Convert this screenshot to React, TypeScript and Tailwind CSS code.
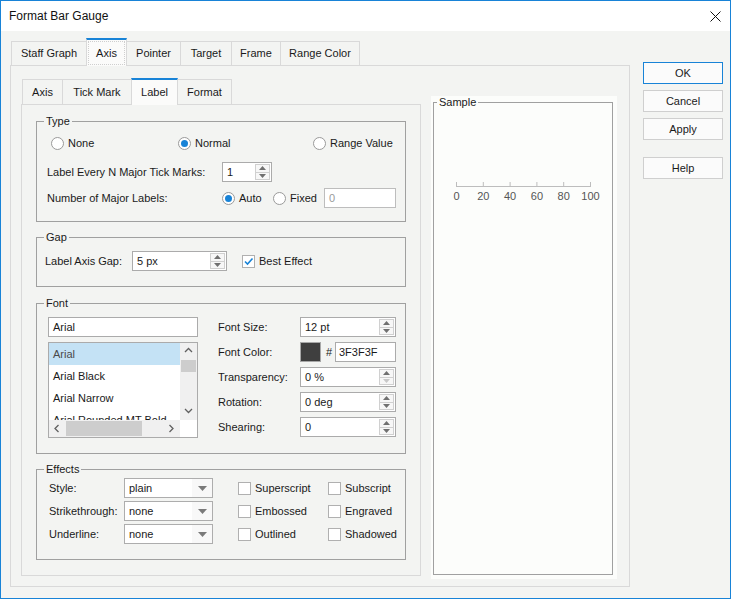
import React from "react";

const fonts = ["Arial", "Arial Black", "Arial Narrow", "Arial Rounded MT Bold"];

function Radio({ checked, label }: { checked?: boolean; label: string }) {
  return (
    <div className="flex items-center gap-[4px]">
      <span className="flex h-[13px] w-[13px] items-center justify-center rounded-full border border-[#9a9a9a] bg-white">
        {checked && <span className="h-[7px] w-[7px] rounded-full bg-[#1883d7]" />}
      </span>
      <span>{label}</span>
    </div>
  );
}

function Checkbox({ checked, label }: { checked?: boolean; label: string }) {
  return (
    <div className="flex items-center gap-[4px]">
      <span className="flex h-[13px] w-[13px] items-center justify-center border border-[#b0b0b0] bg-white">
        {checked && (
          <svg width="11" height="11" viewBox="0 0 11 11">
            <path d="M2 5.5 L4.5 8 L9.5 2.5" fill="none" stroke="#1883d7" strokeWidth="1.6" />
          </svg>
        )}
      </span>
      <span>{label}</span>
    </div>
  );
}

function SpinButtons({ downDisabled }: { downDisabled?: boolean }) {
  return (
    <div className="flex w-[16px] flex-col py-px pr-px">
      <span className="flex flex-1 items-center justify-center border border-[#d0d0d0] bg-[#f7f7f7]">
        <svg width="7" height="4" viewBox="0 0 7 4">
          <path d="M0 4 L3.5 0 L7 4 Z" fill="#707070" />
        </svg>
      </span>
      <span className="-mt-px flex flex-1 items-center justify-center border border-[#d0d0d0] bg-[#f7f7f7]">
        <svg width="7" height="4" viewBox="0 0 7 4">
          <path d="M0 0 L7 0 L3.5 4 Z" fill={downDisabled ? "#c8c8c8" : "#707070"} />
        </svg>
      </span>
    </div>
  );
}

function Spinner({
  value,
  width,
  downDisabled,
}: {
  value: string;
  width: string;
  downDisabled?: boolean;
}) {
  return (
    <div className={`flex h-[20px] border border-[#ababab] bg-white ${width}`}>
      <span className="flex flex-1 items-center pl-[4px]">{value}</span>
      <SpinButtons downDisabled={downDisabled} />
    </div>
  );
}

function Dropdown({ value }: { value: string }) {
  return (
    <div className="flex h-[20px] w-[89px] border border-[#adadad] bg-white">
      <span className="flex flex-1 items-center pl-[4px]">{value}</span>
      <span className="flex w-[20px] items-center justify-center bg-[#f8f8f8]">
        <svg width="9" height="5" viewBox="0 0 9 5">
          <path d="M0 0 H9 L4.5 5 Z" fill="#7a7a7a" />
        </svg>
      </span>
    </div>
  );
}

function Group({
  title,
  className,
  children,
}: {
  title: string;
  className?: string;
  children: React.ReactNode;
}) {
  return (
    <fieldset className={`w-[370px] border border-[#a0a0a0] ${className ?? ""}`}>
      <legend className="ml-[7px] px-[2px] leading-[14px]">{title}</legend>
      {children}
    </fieldset>
  );
}

function Chevron({ dir }: { dir: "up" | "down" | "left" | "right" }) {
  const d = {
    up: "M1 5 L4.5 1.5 L8 5",
    down: "M1 2 L4.5 5.5 L8 2",
    left: "M5.5 1 L2 4.5 L5.5 8",
    right: "M2.5 1 L6 4.5 L2.5 8",
  }[dir];
  return (
    <svg width="9" height="9" viewBox="0 0 9 9">
      <path d={d} fill="none" stroke="#606060" strokeWidth="1.3" />
    </svg>
  );
}

function OuterTab({ label, width, selected }: { label: string; width: string; selected?: boolean }) {
  if (selected) {
    return (
      <div
        className={`relative z-10 -mb-px -ml-px flex h-[28px] items-stretch border-x border-t-2 border-[#d9d9d9] border-t-[#1883d7] bg-[#fbfbfa] p-px ${width}`}
      >
        <span className="flex flex-1 items-center justify-center border border-dotted border-[#cfcfcf]">
          {label}
        </span>
      </div>
    );
  }
  return (
    <div
      className={`-ml-px flex h-[24px] items-center justify-center border border-b-0 border-[#d9d9d9] bg-[#f3f4f2] first:ml-0 ${width}`}
    >
      {label}
    </div>
  );
}

function InnerTab({ label, width, selected }: { label: string; width: string; selected?: boolean }) {
  if (selected) {
    return (
      <div
        className={`relative z-10 -mb-px -ml-px flex h-[27px] items-center justify-center border-x border-t-2 border-[#d9d9d9] border-t-[#1883d7] bg-[#fbfbfa] ${width}`}
      >
        {label}
      </div>
    );
  }
  return (
    <div
      className={`-ml-px flex h-[25px] items-center justify-center border border-b-0 border-[#d9d9d9] bg-[#f3f4f2] first:ml-0 ${width}`}
    >
      {label}
    </div>
  );
}

function DialogButton({ label, primary }: { label: string; primary?: boolean }) {
  return (
    <div
      className={`flex h-[22px] w-[80px] items-center justify-center border bg-[#fbfbfb] ${
        primary ? "border-[#1883d7]" : "border-[#cfcfcf]"
      }`}
    >
      {label}
    </div>
  );
}

function SampleAxis() {
  const ticks = [0, 20, 40, 60, 80, 100];
  return (
    <svg width="178" height="26" viewBox="0 0 178 26" className="mt-[72px]">
      <line x1="22" y1="6.5" x2="157" y2="6.5" stroke="#bdbdbd" />
      {ticks.map((t, i) => {
        const x = 22.5 + i * 26.8;
        return (
          <g key={t}>
            <line x1={x} y1="2" x2={x} y2="6.5" stroke="#bdbdbd" />
            <text
              x={x}
              y="20"
              textAnchor="middle"
              fontSize="11"
              fill="#555"
              fontFamily="'Liberation Sans', Arial, sans-serif"
            >
              {t}
            </text>
          </g>
        );
      })}
    </svg>
  );
}

export default function App() {
  return (
    <div className="flex h-[599px] w-[731px] flex-col border border-[#1883d7] bg-[#f3f4f2] font-['Liberation_Sans',Arial,sans-serif] text-[11px] text-[#1a1a1a]">
      {/* title bar */}
      <div className="flex h-[30px] items-center justify-between bg-white pl-[8px] pr-[9px]">
        <span className="text-[12px] text-[#111]">Format Bar Gauge</span>
        <svg width="11" height="11" viewBox="0 0 11 11">
          <path d="M0.5 0.5 L10.5 10.5 M10.5 0.5 L0.5 10.5" stroke="#111" strokeWidth="1" />
        </svg>
      </div>

      <div className="flex flex-1">
        {/* left: outer tabs */}
        <div className="pl-[9px] pt-[7px]">
          <div className="ml-px flex h-[27px] items-end">
            <OuterTab label="Staff Graph" width="w-[76px]" />
            <OuterTab label="Axis" width="w-[41px]" selected />
            <OuterTab label="Pointer" width="w-[55px]" />
            <OuterTab label="Target" width="w-[52px]" />
            <OuterTab label="Frame" width="w-[50px]" />
            <OuterTab label="Range Color" width="w-[80px]" />
          </div>

          <div className="flex h-[522px] w-[620px] items-start border border-[#d9d9d9]">
            {/* inner tabs + panel */}
            <div className="ml-[10px] mt-[12px]">
              <div className="ml-px flex h-[26px] items-end">
                <InnerTab label="Axis" width="w-[41px]" />
                <InnerTab label="Tick Mark" width="w-[70px]" />
                <InnerTab label="Label" width="w-[47px]" selected />
                <InnerTab label="Format" width="w-[55px]" />
              </div>

              <div className="h-[472px] w-[400px] border border-[#d9d9d9] pl-[14px] pt-[9px]">
                <Group title="Type" className="pb-[13px]">
                  <div className="mt-[7px] flex h-[16px] items-center pl-[14px]">
                    <div className="w-[127px]">
                      <Radio label="None" />
                    </div>
                    <div className="w-[135px]">
                      <Radio label="Normal" checked />
                    </div>
                    <Radio label="Range Value" />
                  </div>
                  <div className="mt-[11px] flex h-[20px] items-center pl-[10px]">
                    <span className="w-[175px]">Label Every N Major Tick Marks:</span>
                    <Spinner value="1" width="w-[50px]" />
                  </div>
                  <div className="mt-[6px] flex h-[20px] items-center pl-[10px]">
                    <span className="w-[175px]">Number of Major Labels:</span>
                    <div className="w-[51px]">
                      <Radio label="Auto" checked />
                    </div>
                    <div className="w-[51px]">
                      <Radio label="Fixed" />
                    </div>
                    <div className="flex h-[20px] w-[72px] items-center border border-[#bdbdbd] bg-white pl-[4px] text-[#9a9a9a]">
                      0
                    </div>
                  </div>
                </Group>

                <Group title="Gap" className="mt-[8px] pb-[15px]">
                  <div className="mt-[7px] flex h-[20px] items-center pl-[8px]">
                    <span className="w-[87px]">Label Axis Gap:</span>
                    <Spinner value="5 px" width="w-[95px]" />
                    <div className="ml-[15px]">
                      <Checkbox label="Best Effect" checked />
                    </div>
                  </div>
                </Group>

                <Group title="Font" className="mt-[9px] pb-[15px]">
                  <div className="mt-[7px] flex pl-[11px]">
                    <div className="w-[150px]">
                      <div className="flex h-[20px] items-center border border-[#ababab] bg-white pl-[4px]">
                        Arial
                      </div>
                      <div className="mt-[5px] grid h-[96px] w-[150px] grid-cols-[1fr_17px] grid-rows-[1fr_17px] border border-[#ababab] bg-white">
                        <div className="overflow-hidden">
                          {fonts.map((f, i) => (
                            <div
                              key={f}
                              className={`flex h-[22px] items-center pl-[4px] ${
                                i === 0 ? "bg-[#c4e2f5] text-[#4a4a4a]" : ""
                              }`}
                            >
                              {f}
                            </div>
                          ))}
                        </div>
                        <div className="flex flex-col items-center bg-[#f0f0f0]">
                          <span className="flex h-[17px] items-center justify-center">
                            <Chevron dir="up" />
                          </span>
                          <span className="h-[12px] w-[15px] bg-[#cdcdcd]" />
                          <span className="flex-1" />
                          <span className="flex h-[17px] items-center justify-center">
                            <Chevron dir="down" />
                          </span>
                        </div>
                        <div className="flex items-center bg-[#f0f0f0]">
                          <span className="flex w-[17px] justify-center">
                            <Chevron dir="left" />
                          </span>
                          <span className="h-[15px] w-[76px] bg-[#cdcdcd]" />
                          <span className="flex-1" />
                          <span className="flex w-[17px] justify-center">
                            <Chevron dir="right" />
                          </span>
                        </div>
                        <div className="bg-white" />
                      </div>
                    </div>

                    <div className="ml-[20px] flex flex-col gap-[5px]">
                      <div className="flex h-[20px] items-center">
                        <span className="w-[82px]">Font Size:</span>
                        <Spinner value="12 pt" width="w-[96px]" />
                      </div>
                      <div className="flex h-[20px] items-center">
                        <span className="w-[82px]">Font Color:</span>
                        <span className="h-[20px] w-[21px] border border-[#a8a8a8] bg-[#3f3f3f]" />
                        <span className="ml-[5px] w-[6px]">#</span>
                        <div className="ml-[3px] flex h-[20px] w-[61px] items-center border border-[#ababab] bg-white pl-[3px]">
                          3F3F3F
                        </div>
                      </div>
                      <div className="flex h-[20px] items-center">
                        <span className="w-[82px]">Transparency:</span>
                        <Spinner value="0 %" width="w-[96px]" downDisabled />
                      </div>
                      <div className="flex h-[20px] items-center">
                        <span className="w-[82px]">Rotation:</span>
                        <Spinner value="0 deg" width="w-[96px]" />
                      </div>
                      <div className="flex h-[20px] items-center">
                        <span className="w-[82px]">Shearing:</span>
                        <Spinner value="0" width="w-[96px]" />
                      </div>
                    </div>
                  </div>
                </Group>

                <Group title="Effects" className="mt-[8px] pb-[15px]">
                  <div className="mt-[2px] flex flex-col gap-[3px] pl-[12px]">
                    {[
                      ["Style:", "plain", "Superscript", "Subscript"],
                      ["Strikethrough:", "none", "Embossed", "Engraved"],
                      ["Underline:", "none", "Outlined", "Shadowed"],
                    ].map(([label, value, a, b]) => (
                      <div key={label} className="flex h-[20px] items-center">
                        <span className="w-[75px]">{label}</span>
                        <Dropdown value={value} />
                        <div className="ml-[25px] w-[90px]">
                          <Checkbox label={a} />
                        </div>
                        <Checkbox label={b} />
                      </div>
                    ))}
                  </div>
                </Group>
              </div>
            </div>

            {/* sample */}
            <div className="ml-[10px] mt-[30px] h-[483px] w-[186px] bg-[#fcfdfb] pl-[2px] pr-[4px]">
              <fieldset className="h-[479px] w-[180px] border border-[#a0a0a0]">
                <legend className="ml-[3px] px-[2px] leading-[12px]">Sample</legend>
                <SampleAxis />
              </fieldset>
            </div>
          </div>
        </div>

        {/* right: buttons */}
        <div className="ml-[13px] flex flex-col gap-[6px] pt-[31px]">
          <DialogButton label="OK" primary />
          <DialogButton label="Cancel" />
          <DialogButton label="Apply" />
          <div className="mt-[11px]">
            <DialogButton label="Help" />
          </div>
        </div>
      </div>
    </div>
  );
}
